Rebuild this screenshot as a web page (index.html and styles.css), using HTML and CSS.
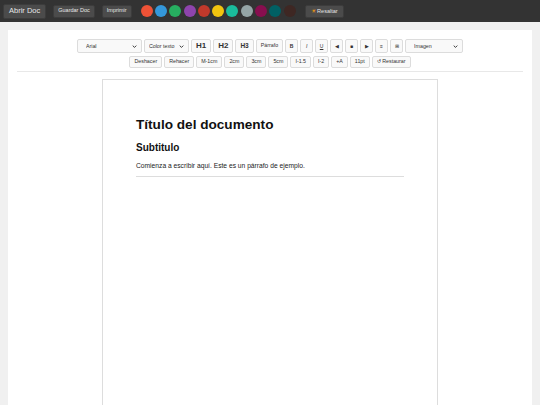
FILE: index.html
```html
<!DOCTYPE html>
<html lang="es">
<head>
<meta charset="utf-8">
<title>Editor</title>
<link rel="stylesheet" href="styles.css">
</head>
<body>
<header class="topbar">
  <button class="tb-btn tb-main">Abrir Doc</button>
  <button class="tb-btn">Guardar Doc</button>
  <button class="tb-btn">Imprimir</button>
  <div class="swatches">
    <span class="sw c1"></span><span class="sw c2"></span><span class="sw c3"></span><span class="sw c4"></span><span class="sw c5"></span><span class="sw c6"></span><span class="sw c7"></span><span class="sw c8"></span><span class="sw c9"></span><span class="sw c10"></span><span class="sw c11"></span>
  </div>
  <button class="tb-btn tb-hl"><span class="sun">☀</span> Resaltar</button>
</header>
<main class="wrap">
  <div class="card">
    <div class="toolbar">
      <div class="row">
        <span class="selwrap sel-font"><select class="sel"><option>Arial</option></select><svg class="chev" viewBox="0 0 8 5" width="5" height="3"><path d="M1 1 L4 4 L7 1" fill="none" stroke="#333" stroke-width="1.6"/></svg></span>
        <span class="selwrap sel-color"><select class="sel"><option>Color texto</option></select><svg class="chev" viewBox="0 0 8 5" width="5" height="3"><path d="M1 1 L4 4 L7 1" fill="none" stroke="#333" stroke-width="1.6"/></svg></span>
        <button class="b b-h">H1</button>
        <button class="b b-h">H2</button>
        <button class="b b-h3">H3</button>
        <button class="b">Párrafo</button>
        <button class="b b-sq"><b>B</b></button>
        <button class="b b-sq"><i>I</i></button>
        <button class="b b-sq"><u>U</u></button>
        <button class="b b-sq">◀</button>
        <button class="b b-sq">■</button>
        <button class="b b-sq">▶</button>
        <button class="b b-sq">≡</button>
        <button class="b b-sq">⊞</button>
        <span class="selwrap sel-img"><select class="sel"><option>Imagen</option></select><svg class="chev" viewBox="0 0 8 5" width="5" height="3"><path d="M1 1 L4 4 L7 1" fill="none" stroke="#333" stroke-width="1.6"/></svg></span>
      </div>
      <div class="row row2">
        <button class="b">Deshacer</button>
        <button class="b">Rehacer</button>
        <button class="b">M-1cm</button>
        <button class="b">2cm</button>
        <button class="b">3cm</button>
        <button class="b">5cm</button>
        <button class="b">I-1.5</button>
        <button class="b">I-2</button>
        <button class="b">+A</button>
        <button class="b">11pt</button>
        <button class="b">↺ Restaurar</button>
      </div>
    </div>
    <div class="page">
      <h1 class="doc-title">Título del documento</h1>
      <h2 class="doc-sub">Subtitulo</h2>
      <p class="doc-p">Comienza a escribir aquí. Este es un párrafo de ejemplo.</p>
      <hr class="doc-hr">
    </div>
  </div>
</main>
</body>
</html>
```
FILE: styles.css
```css
* { box-sizing: border-box; }
html, body { margin: 0; padding: 0; }
body {
  background: #f0f0f0;
  font-family: "Liberation Sans", Arial, sans-serif;
  height: 405px;
  overflow: hidden;
}
.topbar {
  height: 22px;
  background: #333333;
  display: flex;
  align-items: center;
  padding: 0 3px;
}
.tb-btn {
  font-family: "Liberation Sans", Arial, sans-serif;
  background: #4b4b4b;
  color: #e6e6e6;
  border: 1px solid #3c3c3c;
  border-radius: 2px;
  height: 13px;
  padding: 0 4px;
  font-size: 5.5px;
  margin-right: 7px;
  line-height: 1;
}
.tb-main {
  height: 15px;
  font-size: 7.5px;
  padding: 0 5px;
}
.swatches {
  display: flex;
  gap: 2.3px;
  margin-left: 2px;
  margin-right: 9px;
}
.sw {
  width: 12px;
  height: 12px;
  border-radius: 50%;
  display: block;
}
.c1 { background: #ee5236; }
.c2 { background: #3498db; }
.c3 { background: #27ae60; }
.c4 { background: #8e44ad; }
.c5 { background: #c0392b; }
.c6 { background: #f1c40f; }
.c7 { background: #1abc9c; }
.c8 { background: #95a5a6; }
.c9 { background: #880e4f; }
.c10 { background: #006064; }
.c11 { background: #3e2723; }
.tb-hl { padding: 0 5px; }
.sun { color: #f39c12; font-size: 6px; }

.wrap {
  padding: 8px 8px 0 8px;
}
.card {
  background: #ffffff;
  height: 380px;
  padding: 9px 9px 0 9px;
}
.toolbar {
  display: flex;
  flex-direction: column;
  align-items: center;
  gap: 3px;
  padding-bottom: 3px;
  border-bottom: 1px solid #e8e8e8;
}
.row {
  display: flex;
  gap: 2px;
  align-items: center;
  height: 14px;
}
.row2 { height: 12px; gap: 2px; }
.b {
  font-family: "Liberation Sans", Arial, sans-serif;
  font-size: 5.3px;
  color: #333;
  background: #f9f9f9;
  border: 1px solid #dcdcdc;
  border-radius: 2px;
  height: 100%;
  padding: 0 4px;
  line-height: 1;
}
.b-h { font-size: 8px; font-weight: bold; padding: 0 4px; }
.b-h3 { font-size: 6.5px; font-weight: bold; padding: 0 4px; }
.b-sq { width: 13px; padding: 0; font-size: 5px; }
.selwrap {
  position: relative;
  display: block;
  height: 14px;
}
.sel {
  appearance: none;
  -webkit-appearance: none;
  font-family: "Liberation Sans", Arial, sans-serif;
  font-size: 5.3px;
  color: #333;
  background: #f9f9f9;
  border: 1px solid #dcdcdc;
  border-radius: 2px;
  height: 14px;
  width: 100%;
  padding: 0 4px;
  display: block;
}
.chev {
  position: absolute;
  right: 5px;
  top: 5.5px;
}
.sel-font { width: 65px; }
.sel-color { width: 45px; }
.sel-img { width: 58px; }
.sel-font .sel { padding-left: 8px; }
.sel-img .sel { padding-left: 8px; }

.page {
  width: 336px;
  margin: 7px auto 0 auto;
  border: 1px solid #dddddd;
  border-bottom: none;
  height: 330px;
  padding: 36px 33px 0 33px;
}
.doc-title {
  margin: 0;
  font-size: 13.6px;
  line-height: 18px;
  font-weight: bold;
  color: #111;
}
.doc-sub {
  margin: 7px 0 0 0;
  font-size: 10px;
  line-height: 14px;
  font-weight: bold;
  color: #111;
}
.doc-p {
  margin: 6px 0 0 0;
  font-size: 6.7px;
  line-height: 9px;
  color: #222;
}
.doc-hr {
  margin: 6px 0 0 0;
  border: none;
  border-top: 1.5px solid #dddddd;
}
```
